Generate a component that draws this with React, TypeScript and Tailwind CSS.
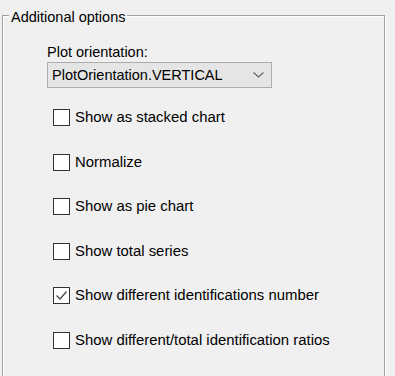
import React from "react";

const items: { label: string; checked: boolean }[] = [
  { label: "Show as stacked chart", checked: false },
  { label: "Normalize", checked: false },
  { label: "Show as pie chart", checked: false },
  { label: "Show total series", checked: false },
  { label: "Show different identifications number", checked: true },
  { label: "Show different/total identification ratios", checked: false },
];

function Box({ checked }: { checked: boolean }) {
  return (
    <div className="w-[17px] h-[17px] border border-[#333333] bg-white shrink-0 flex items-center justify-center">
      {checked && (
        <svg width="15" height="15" viewBox="0 0 15 15">
          <path d="M2.5 7.5 L6 11 L12.5 3.5" fill="none" stroke="#444" strokeWidth="1.2" />
        </svg>
      )}
    </div>
  );
}

export default function App() {
  return (
    <div className="w-[395px] h-[376px] bg-[#f0f0f0] overflow-hidden pt-[15px] pl-[2px] font-['Liberation_Sans',Arial,sans-serif] text-[14.5px] leading-[17px] text-black">
      <div className="relative w-[383px] h-[400px] border border-[#a0a0a0] shadow-[1px_1px_0_#ffffff,inset_1px_1px_0_#ffffff]">
        <span className="absolute left-[6px] top-[-7.5px] px-[2px] bg-[#f0f0f0]">Additional options</span>
        <div className="pt-[27.5px] pl-[44px]">
          <div>Plot orientation:</div>
          <div className="mt-[1.5px] w-[225px] h-[26px] border border-[#adadad] bg-[#e5e5e5] flex items-center justify-between pl-[4px] pr-[7px]">
            <span>PlotOrientation.VERTICAL</span>
            <svg width="11" height="6" viewBox="0 0 11 6">
              <path d="M0.5 0.5 L5.5 5 L10.5 0.5" fill="none" stroke="#606060" strokeWidth="1.1" />
            </svg>
          </div>
        </div>
        <div className="mt-[21px] pl-[50px] flex flex-col gap-[27.5px]">
          {items.map((it) => (
            <div key={it.label} className="flex items-center h-[17px] gap-[5px]">
              <Box checked={it.checked} />
              <span className="whitespace-nowrap text-[14.9px]">{it.label}</span>
            </div>
          ))}
        </div>
      </div>
    </div>
  );
}
